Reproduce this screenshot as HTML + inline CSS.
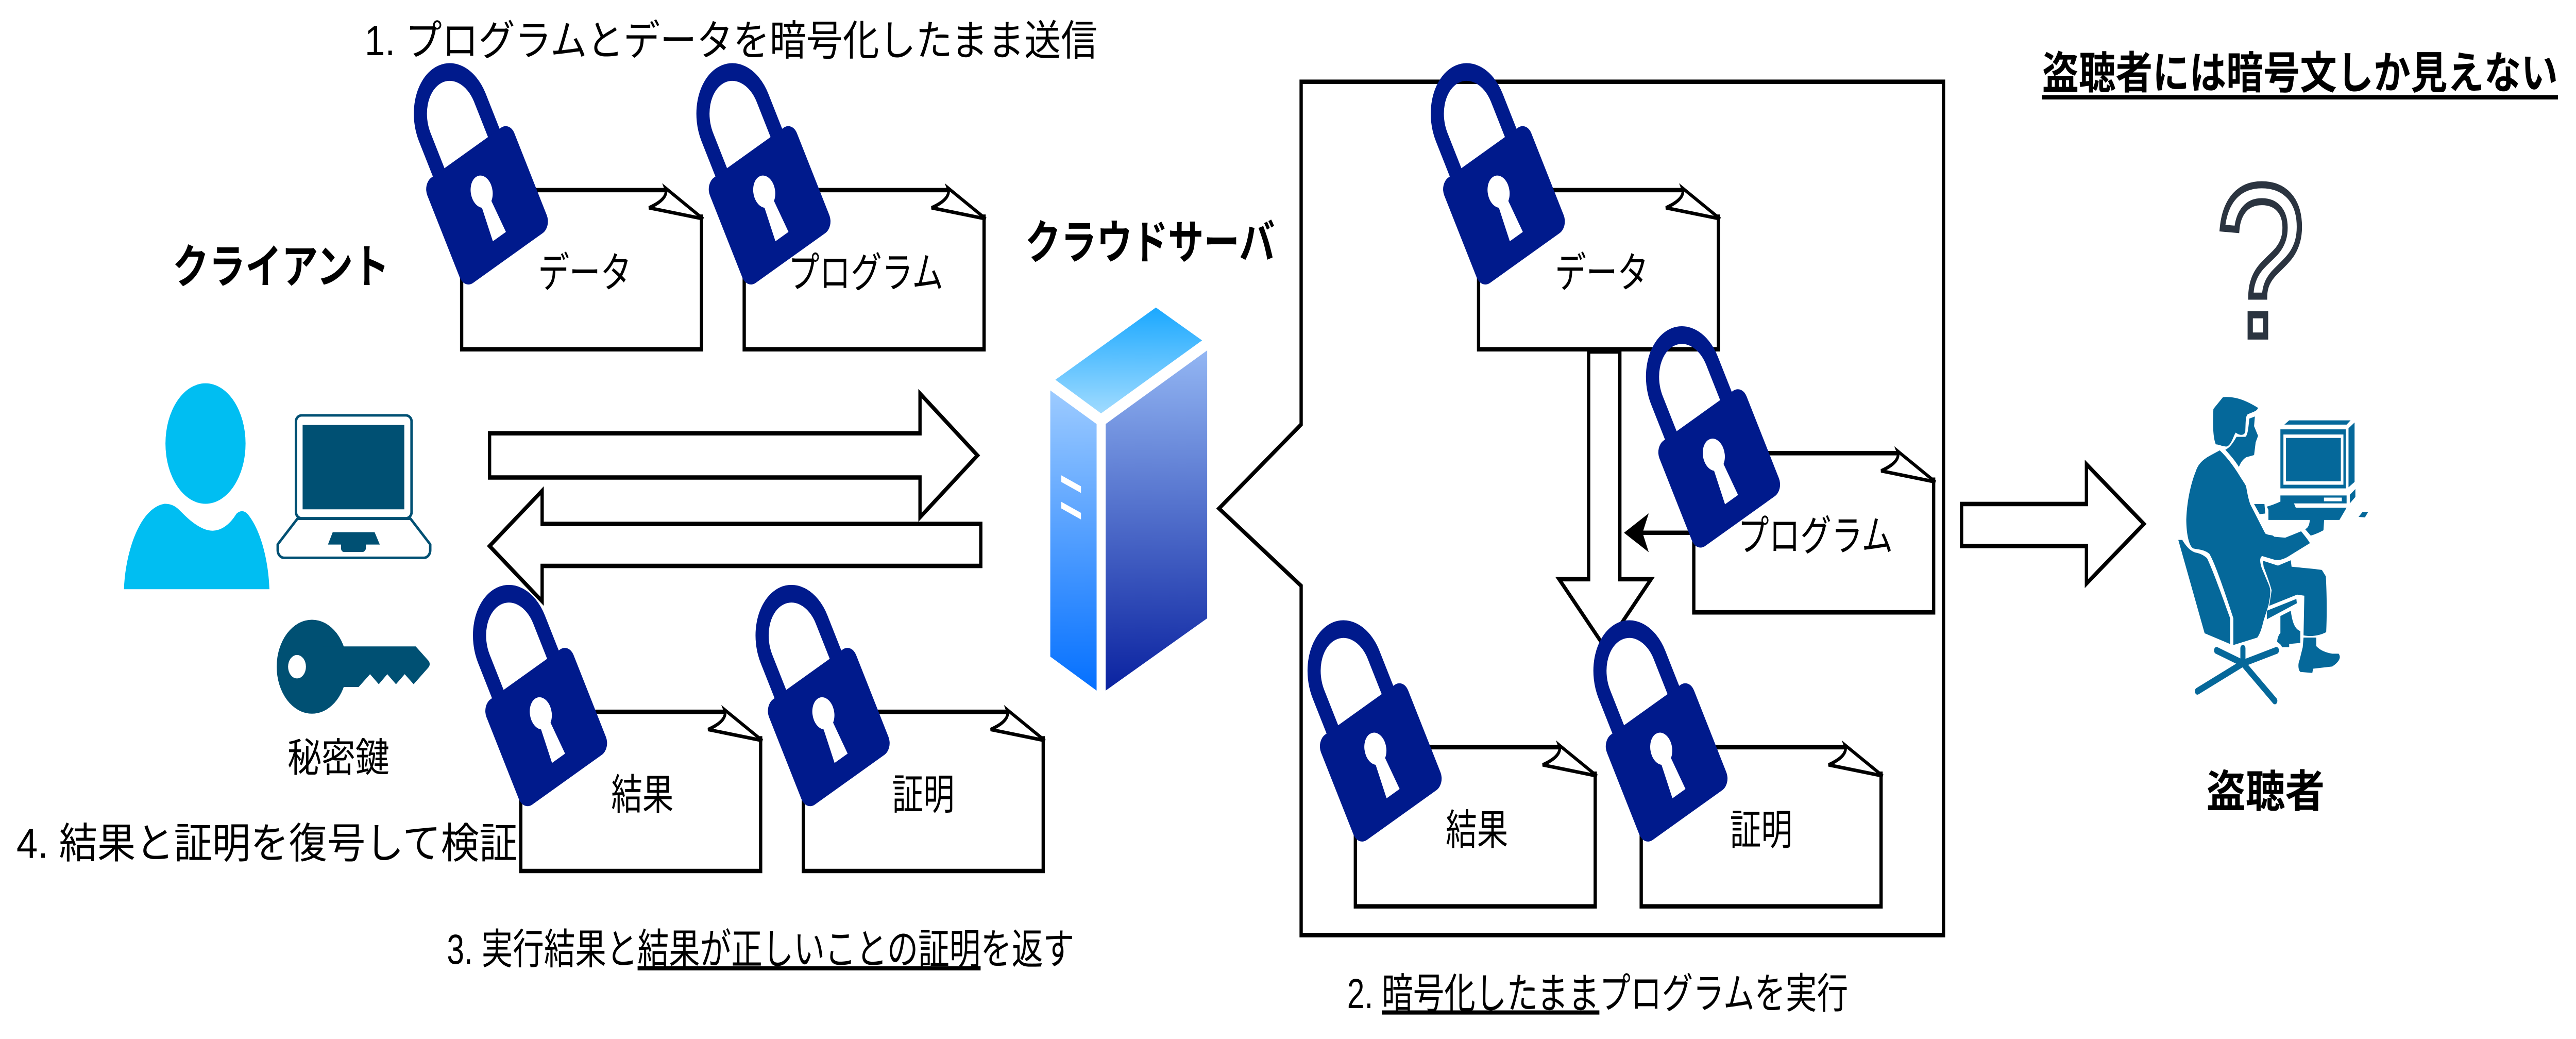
<!DOCTYPE html>
<html><head><meta charset="utf-8"><style>
html,body{margin:0;padding:0;background:#fff;width:100vw;height:100vh;overflow:hidden}
svg{display:block;width:100vw;height:100vh}
text{font-family:"Liberation Sans","Noto Sans CJK JP",sans-serif;fill:#000}
</style></head><body>
<svg viewBox="0 0 1568 470" preserveAspectRatio="none" xmlns="http://www.w3.org/2000/svg">
<defs>
<g id="lock">
<path d="M-19,-20 V-44 A19,21 0 0 1 19,-44 V-20" fill="none" stroke="#001a8c" stroke-width="8"/>
<rect x="-30" y="-26" width="60" height="54" rx="6" fill="#001a8c"/>
<ellipse cx="0" cy="-6" rx="6.5" ry="7.5" fill="#fff"/>
<path d="M-3,-3 L3,-3 L4.5,17 L-4.5,17Z" fill="#fff"/>
</g>
<g id="doc">
<path d="M0,0 H124 L146,12 V72 H0 Z" fill="#fff" stroke="none"/>
<path d="M0,0 H124 M146,11 V72 H0 V0" fill="none" stroke="#000" stroke-width="2"/>
<path d="M124,-1 L147,13 L114,8 C120,6 126,3 124,-1 Z" fill="#fff" stroke="#000" stroke-width="1.6"/>
</g>
<linearGradient id="gtop" x1="0" y1="0" x2="0" y2="1"><stop offset="0" stop-color="#1aa8ff"/><stop offset="1" stop-color="#a0dbff"/></linearGradient>
<linearGradient id="gleft" x1="0" y1="0" x2="0" y2="1"><stop offset="0" stop-color="#9dcbff"/><stop offset="1" stop-color="#0470ff"/></linearGradient>
<linearGradient id="gright" x1="0" y1="0" x2="0" y2="1"><stop offset="0" stop-color="#93b6f3"/><stop offset="1" stop-color="#0a22a0"/></linearGradient>
</defs>

<text x="222" y="25" font-size="19" textLength="446" lengthAdjust="spacingAndGlyphs">1. プログラムとデータを暗号化したまま送信</text>
<text x="105" y="128" font-size="21" font-weight="bold" textLength="132" lengthAdjust="spacingAndGlyphs">クライアント</text>
<text x="624" y="117" font-size="21" font-weight="bold" textLength="152" lengthAdjust="spacingAndGlyphs">クラウドサーバ</text>
<text x="175" y="349" font-size="18" textLength="62" lengthAdjust="spacingAndGlyphs">秘密鍵</text>
<text x="10" y="388" font-size="19" textLength="305" lengthAdjust="spacingAndGlyphs">4. 結果と証明を復号して検証</text>
<text x="272" y="436" font-size="19">3. 実行結果と<tspan text-decoration="underline">結果が正しいことの証明</tspan>を返す</text>
<text x="820" y="456" font-size="19">2. <tspan text-decoration="underline">暗号化したまま</tspan>プログラムを実行</text>
<text x="1243" y="40" font-size="20" font-weight="bold" textLength="314" lengthAdjust="spacingAndGlyphs">盗聴者には暗号文しか見えない</text>
<rect x="1243" y="43" width="314" height="2" fill="#000"/>
<text x="1343" y="365" font-size="20" font-weight="bold" textLength="72" lengthAdjust="spacingAndGlyphs">盗聴者</text>

<path d="M792,37 H1183 V423 H792 V265 L742,230 L792,192 Z" fill="#fff" stroke="#000" stroke-width="2"/>

<path d="M298,196 H560 V178 L595,206 L560,234 V216 H298 Z" fill="#fff" stroke="#000" stroke-width="2"/>
<path d="M597,237 H330 V222 L298,247 L330,272 V256 H597 Z" fill="#fff" stroke="#000" stroke-width="2"/>
<path d="M1194,228 H1270 V210 L1305,237 L1270,264 V247 H1194 Z" fill="#fff" stroke="#000" stroke-width="2"/>
<path d="M967,159 V262 H949 L977,293 L1005,262 H986 V159 Z" fill="#fff" stroke="#000" stroke-width="2"/>
<line x1="1031" y1="241" x2="998" y2="241" stroke="#000" stroke-width="2"/>
<path d="M990,241 L1002,234 L999,241 L1002,248 Z" fill="#000" stroke="#000" stroke-width="1.5"/>

<use href="#doc" x="281" y="86"/>
<use href="#doc" x="453" y="86"/>
<use href="#doc" x="317" y="322"/>
<use href="#doc" x="489" y="322"/>
<use href="#doc" x="900" y="86"/>
<use href="#doc" x="1031" y="205"/>
<use href="#doc" x="825" y="338"/>
<use href="#doc" x="999" y="338"/>
<g font-size="19" text-anchor="middle">
<text x="356" y="130">データ</text>
<text x="527" y="130">プログラム</text>
<text x="391" y="366">結果</text>
<text x="562" y="366">証明</text>
<text x="975" y="130">データ</text>
<text x="1105" y="249">プログラム</text>
<text x="899" y="382">結果</text>
<text x="1072" y="382">証明</text>
</g>
<use href="#lock" transform="translate(296,92) rotate(-28)"/>
<use href="#lock" transform="translate(468,92) rotate(-28)"/>
<use href="#lock" transform="translate(332,328) rotate(-28)"/>
<use href="#lock" transform="translate(504,328) rotate(-28)"/>
<use href="#lock" transform="translate(915,92) rotate(-28)"/>
<use href="#lock" transform="translate(1046,211) rotate(-28)"/>
<use href="#lock" transform="translate(840,344) rotate(-28)"/>
<use href="#lock" transform="translate(1014,344) rotate(-28)"/>

<path d="M642.4,171.8 L703.6,139.1 L731.7,154 L670.2,187 Z" fill="url(#gtop)"/>
<path d="M639.3,176.6 L667.5,191.8 L667.5,312.4 L639.3,297 Z" fill="url(#gleft)"/>
<path d="M673,191.8 L734.8,158.5 L734.8,279.7 L673,312.4 Z" fill="url(#gright)"/>
<path d="M646,215 L658,220 V223 L646,218 Z M646,227 L658,232 V235 L646,230 Z" fill="#fff"/>

<g transform="translate(69.9,167.8) scale(0.1263,0.0966)">
<ellipse cx="437" cy="340" rx="193" ry="282" fill="#00bef2"/>
<path d="M44,1022 C50,850 120,640 240,622 C280,622 300,640 320,660 C380,720 430,748 470,748 C520,748 560,710 585,670 C600,655 620,650 640,670 C700,740 740,880 745,1022 Z" fill="#00bef2"/>
<rect x="873" y="208" width="557" height="482" rx="28" fill="#fff" stroke="#005073" stroke-width="12"/>
<rect x="905" y="253" width="490" height="395" fill="#005073"/>
<path d="M880,692 L785,812 L785,840 C785,860 800,875 815,875 L1490,875 C1505,875 1520,860 1520,840 L1520,812 L1425,692 Z" fill="#fff" stroke="#005073" stroke-width="12"/>
<path d="M1050,755 L1252,755 L1277,813 L1210,813 L1210,830 C1210,840 1200,848 1195,848 L1105,848 C1095,848 1090,838 1090,830 L1090,813 L1027,813 Z" fill="#005073"/>
<ellipse cx="950" cy="1385" rx="170" ry="220" fill="#005073"/>
<path d="M1000,1290 L1450,1290 L1510,1355 C1520,1365 1520,1380 1510,1390 L1440,1467 L1397,1420 L1355,1467 L1313,1420 L1272,1467 L1230,1420 L1175,1480 L1000,1480 Z" fill="#005073"/>
<ellipse cx="878" cy="1385" rx="43" ry="55" fill="#fff"/>
</g>

<text x="1376" y="152" font-size="98" text-anchor="middle" stroke="#2b3440" stroke-width="3.2" style="fill:#fff">?</text>

<g transform="translate(1316.7,174.8) scale(0.0971)" fill="#05689a">
<path d="M315,105 L375,50 C450,45 520,65 595,100 C590,115 560,120 530,130 C515,140 518,170 515,210 C510,230 480,230 455,215 C440,230 430,270 400,280 C370,280 350,270 330,270 C315,240 310,200 315,105 Z"/>
<path d="M540,150 L575,140 L570,185 L595,230 L580,260 L570,320 L520,330 C500,340 485,355 475,375 C450,345 420,320 390,295 C420,285 440,260 460,235 L515,235 C530,230 535,190 540,150 Z"/>
<path d="M300,320 L355,298 C400,330 440,370 470,405 C490,430 510,450 520,465 C530,510 540,540 550,555 L640,685 C660,695 690,690 695,700 L765,705 L865,675 C880,690 905,710 920,730 L800,785 C750,810 720,810 700,808 L620,790 C600,800 610,830 620,850 L660,920 C680,950 670,980 660,1020 L630,1090 C620,1120 610,1150 590,1170 L440,1205 L440,1080 C400,990 330,830 290,780 C260,760 220,760 190,755 C160,745 145,680 145,620 C150,520 180,440 205,395 C220,360 250,340 300,320 Z"/>
<path d="M95,715 L120,715 C140,740 170,770 210,775 C240,780 260,790 275,800 C320,870 380,1000 420,1080 L420,1200 L260,1150 Z"/>
<path d="M800,810 L805,840 C870,845 950,850 995,855 L1020,885 C1025,960 1028,1050 1022,1145 C970,1165 920,1165 880,1160 L885,975 L840,970 L665,1022 L680,950 C670,920 650,880 630,840 L625,812 L720,835 Z"/>
<path d="M880,1170 L960,1170 L960,1210 C985,1230 1020,1240 1060,1245 L1100,1245 C1115,1260 1110,1280 1060,1305 L940,1315 L935,1335 L860,1330 C845,1320 845,1290 855,1275 L875,1215 Z"/>
<path d="M735,1070 L800,1045 C810,1100 825,1130 860,1140 L860,1195 L790,1200 L790,1215 L745,1215 C740,1200 720,1195 715,1190 C715,1170 730,1150 735,1150 Z"/>
<path d="M650,1045 L835,990 L838,1010 L650,1085 Z"/>
<g stroke="#05689a" stroke-width="32" stroke-linecap="round">
<line x1="500" y1="1290" x2="215" y2="1420"/>
<line x1="500" y1="1290" x2="335" y2="1230"/>
<line x1="500" y1="1290" x2="700" y2="1465"/>
<line x1="500" y1="1290" x2="710" y2="1230"/>
<line x1="500" y1="1290" x2="500" y2="1220"/>
</g>
<path d="M760,178 L790,158 L1175,158 L1150,178 Z"/>
<rect x="735" y="200" width="410" height="275"/>
<rect x="762" y="232" width="360" height="218" fill="none" stroke="#fff" stroke-width="16"/>
<path d="M1162,195 L1200,168 L1200,445 L1162,470 Z"/>
<rect x="735" y="508" width="415" height="37"/>
<rect x="1008" y="518" width="112" height="17" fill="#fff"/>
<path d="M1170,505 L1205,478 L1205,515 L1170,545 Z"/>
<path d="M570,548 L635,548 L640,592 L605,595 Z"/>
<path d="M660,565 L1150,565 L1105,622 L660,622 Z"/>
<path d="M1225,608 L1250,585 L1285,585 L1265,610 Z"/>
<path d="M650,560 C700,550 720,540 760,530 L820,545 L840,580 C900,590 1000,600 1050,605 L1010,610 L1005,670 C980,680 950,690 925,695 L890,665 C910,660 920,640 920,612 L870,600 C830,590 760,585 660,575 Z"/>
</g>
</svg>
</body></html>
